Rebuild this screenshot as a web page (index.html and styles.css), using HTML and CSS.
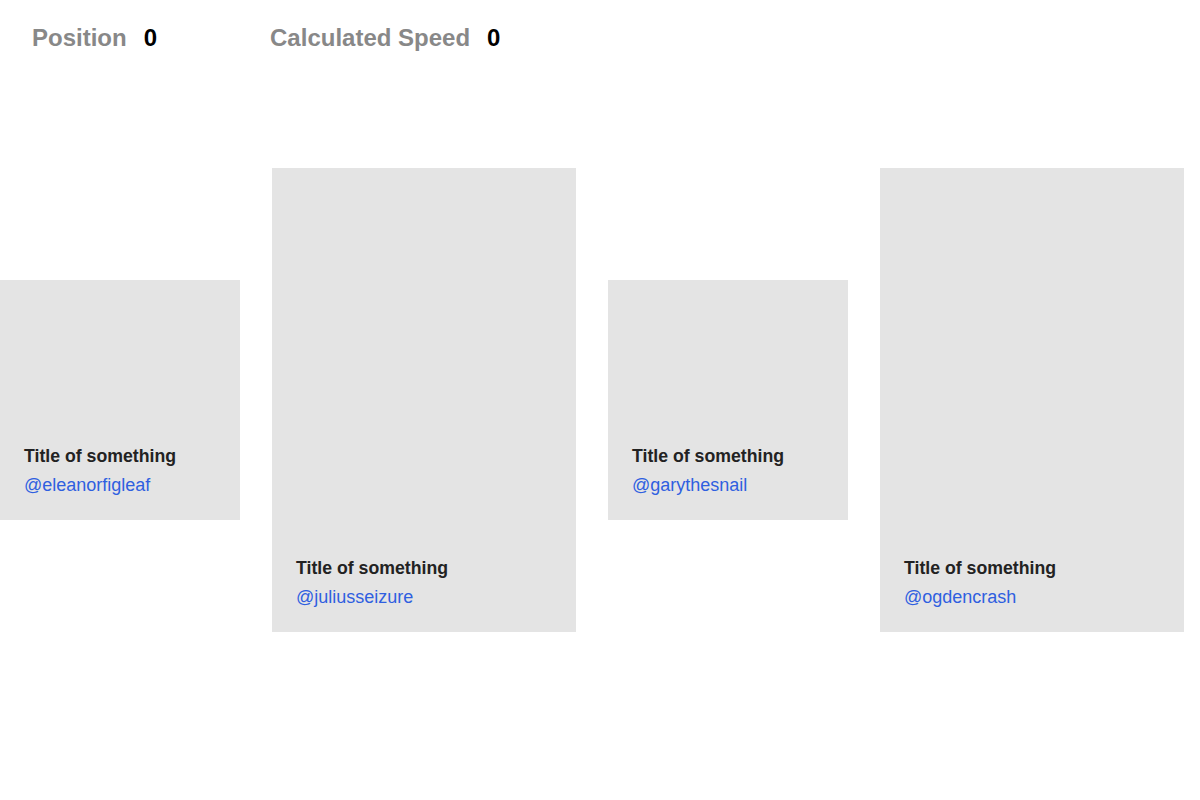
FILE: index.html
```html
<!DOCTYPE html>
<html>
<head>
<meta charset="utf-8">
<link rel="stylesheet" href="styles.css">
</head>
<body>
<header class="stats">
  <div class="stat"><span class="stat-label">Position</span><span class="stat-value">0</span></div>
  <div class="stat"><span class="stat-label">Calculated Speed</span><span class="stat-value">0</span></div>
</header>
<main class="track">
  <div class="card card-small">
    <div class="card-title">Title of something</div>
    <div class="card-handle">@eleanorfigleaf</div>
  </div>
  <div class="card card-tall">
    <div class="card-title">Title of something</div>
    <div class="card-handle">@juliusseizure</div>
  </div>
  <div class="card card-small">
    <div class="card-title">Title of something</div>
    <div class="card-handle">@garythesnail</div>
  </div>
  <div class="card card-tall">
    <div class="card-title">Title of something</div>
    <div class="card-handle">@ogdencrash</div>
  </div>
</main>
</body>
</html>
```
FILE: styles.css
```css
html, body {
  margin: 0;
  padding: 0;
  background: #ffffff;
  font-family: "Liberation Sans", Arial, Helvetica, sans-serif;
  overflow: hidden;
}
.stats {
  display: flex;
  gap: 113px;
  padding: 23px 32px 0;
  height: 57px;
}
.stat {
  display: flex;
  gap: 17px;
  font-size: 24px;
  font-weight: bold;
  line-height: 29px;
}
.stat-label {
  color: #888888;
}
.stat-value {
  color: #000000;
}
.track {
  display: flex;
  align-items: center;
  gap: 32px;
  height: 640px;
}
.card {
  flex: none;
  background: #e4e4e4;
  box-sizing: border-box;
  padding: 24px;
  display: flex;
  flex-direction: column;
  justify-content: flex-end;
}
.card-small {
  width: 240px;
  height: 240px;
}
.card-tall {
  width: 304px;
  height: 464px;
}
.card-title {
  font-size: 17.7px;
  font-weight: bold;
  color: #222222;
  line-height: 22px;
  margin-bottom: 7px;
}
.card-handle {
  font-size: 18px;
  color: #2f5fe0;
  line-height: 22px;
}
```
